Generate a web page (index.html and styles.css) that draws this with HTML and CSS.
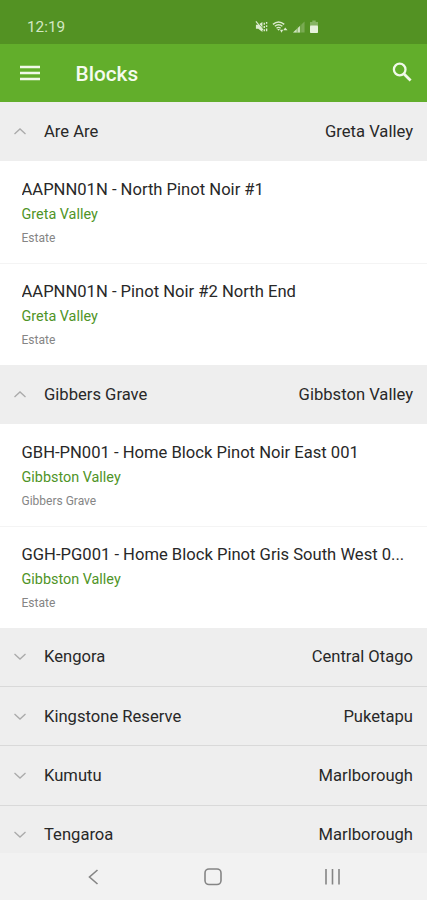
FILE: index.html
```html
<!DOCTYPE html>
<html lang="en">
<head>
    <meta charset="UTF-8">
    <meta name="viewport" content="width=device-width, initial-scale=1.0">
    <title>Blocks</title>
    <link rel="stylesheet" href="styles.css">
</head>
<body>
    <div class="status-bar">
        <span class="time">12:19</span>
        <div class="status-icons">
            <!-- muted -->
            <svg width="13" height="14" viewBox="0 0 14 14">
                <path d="M1 4.5h2.5L8 1.5v11L3.5 9H1z" fill="#dcebcf"/>
                <path d="M2 1l10 12" stroke="#539223" stroke-width="1"/>
                <path d="M1 1l7.5 9" stroke="#dcebcf" stroke-width="1.2"/>
                <path d="M10 2.5v2M10 6v2M10 9.500v2M12.5 1.5v2M12.5 5v2M12.5 8.5v3" stroke="#dcebcf" stroke-width="1.5"/>
            </svg>
            <!-- wifi -->
            <svg width="16" height="14" viewBox="0 0 17 14">
                <path d="M1 4.2Q7 -1 13 4.2M3 6.2Q7 3 11 6.2M4.8 8.3Q7 6.5 9.2 8.3" fill="none" stroke="#dcebcf" stroke-width="1.5"/>
                <path d="M5.5 9.2h3L7 11z" fill="#dcebcf"/>
                <path d="M8.5 10h3.5L10 13zM12 10.5h4.5L14 7.5z" fill="#dcebcf"/>
            </svg>
            <!-- signal -->
            <svg width="12" height="14" viewBox="0 0 13 14">
                <path d="M0 13L12.5 1v12z" fill="#79aa52"/>
                <path d="M0 13l7.5-7.2V13z" fill="#cfe3be"/>
                <path d="M4.5 6v7M8.5 3v10" stroke="#639d38" stroke-width=".8"/>
            </svg>
            <!-- battery -->
            <svg width="10" height="14" viewBox="0 0 10 14">
                <path d="M3.3 .5h3.4V2H9v4H1V2h2.3z" fill="#86b463"/>
                <rect x="1" y="5.5" width="8" height="7.5" rx=".8" fill="#e6f2dc"/>
            </svg>
        </div>
    </div>

    <div class="app-bar">
        <svg class="menu" width="20" height="16" viewBox="0 0 20 16">
            <path d="M0 2h20M0 8h20M0 14h20" stroke="#f1f9e9" stroke-width="2.3"/>
        </svg>
        <h1>Blocks</h1>
        <svg class="search" width="20" height="20" viewBox="0 0 20 20">
            <circle cx="7.7" cy="7.5" r="5.8" fill="none" stroke="#f1f9e9" stroke-width="2.3"/>
            <path d="M11.8 11.7l6.8 6.8" stroke="#f1f9e9" stroke-width="2.8"/>
        </svg>
    </div>

    <div class="list">
        <div class="group">
            <svg class="arrow" width="12" height="7" viewBox="0 0 12 7"><path d="M.5 6L6 1l5.5 5"/></svg>
            <span class="name">Are Are</span>
            <span class="region">Greta Valley</span>
        </div>
        <div class="block">
            <div class="title">AAPNN01N - North Pinot Noir #1</div>
            <div class="place">Greta Valley</div>
            <div class="owner">Estate</div>
        </div>
        <div class="block">
            <div class="title">AAPNN01N - Pinot Noir #2 North End</div>
            <div class="place">Greta Valley</div>
            <div class="owner">Estate</div>
        </div>

        <div class="group">
            <svg class="arrow" width="12" height="7" viewBox="0 0 12 7"><path d="M.5 6L6 1l5.5 5"/></svg>
            <span class="name">Gibbers Grave</span>
            <span class="region">Gibbston Valley</span>
        </div>
        <div class="block">
            <div class="title">GBH-PN001 - Home Block Pinot Noir East 001</div>
            <div class="place">Gibbston Valley</div>
            <div class="owner">Gibbers Grave</div>
        </div>
        <div class="block">
            <div class="title">GGH-PG001 - Home Block Pinot Gris South West 0...</div>
            <div class="place">Gibbston Valley</div>
            <div class="owner">Estate</div>
        </div>

        <div class="group closed">
            <svg class="arrow" width="12" height="7" viewBox="0 0 12 7"><path d="M.5 1L6 6l5.5-5"/></svg>
            <span class="name">Kengora</span>
            <span class="region">Central Otago</span>
        </div>
        <div class="group closed">
            <svg class="arrow" width="12" height="7" viewBox="0 0 12 7"><path d="M.5 1L6 6l5.5-5"/></svg>
            <span class="name">Kingstone Reserve</span>
            <span class="region">Puketapu</span>
        </div>
        <div class="group closed">
            <svg class="arrow" width="12" height="7" viewBox="0 0 12 7"><path d="M.5 1L6 6l5.5-5"/></svg>
            <span class="name">Kumutu</span>
            <span class="region">Marlborough</span>
        </div>
        <div class="group closed">
            <svg class="arrow" width="12" height="7" viewBox="0 0 12 7"><path d="M.5 1L6 6l5.5-5"/></svg>
            <span class="name">Tengaroa</span>
            <span class="region">Marlborough</span>
        </div>
    </div>

    <div class="nav-bar">
        <svg width="18" height="18" viewBox="0 0 18 18"><path d="M12.5 2L4.5 9l8 7"/></svg>
        <svg width="18" height="18" viewBox="0 0 18 18"><rect x="1" y="1" width="16" height="15.5" rx="4"/></svg>
        <svg width="18" height="18" viewBox="0 0 18 18"><path d="M3 1v15.5M9.5 1v15.5M16 1v15.5"/></svg>
    </div>
</body>
</html>
```

FILE: styles.css
```css
* {
    box-sizing: border-box;
}

body {
    display: flex;
    flex-direction: column;
    height: 900px;
    margin: 0;
    overflow: hidden;
    background-color: #fff;
    color: #282828;
    font-family: Roboto, Arial, sans-serif;
}

.status-bar {
    display: flex;
    align-items: center;
    flex: none;
    height: 44px;
    padding: 10px 108px 0 27px;
    background-color: #539223;
}

.time {
    color: #d3e8c3;
    font-size: 15.3px;
}

.status-icons {
    display: flex;
    gap: 4.5px;
    margin-left: auto;
}

.app-bar {
    display: flex;
    align-items: center;
    flex: none;
    height: 58px;
    padding: 0 15px 0 19.5px;
    background-color: #62ae2b;
}

.app-bar h1 {
    margin: 2px 0 0 36px;
    color: #f5fbef;
    font-size: 20.8px;
    font-weight: 500;
}

.search {
    margin: -2px 0 0 auto;
}

.list {
    flex: 1;
    min-height: 0;
    overflow: hidden;
}

.group {
    display: flex;
    align-items: center;
    height: 59.2px;
    padding: 0 14px;
    background-color: #eee;
    font-size: 16.6px;
}

.closed {
    height: 59.4px;
    border-bottom: 1px solid #d9d9d9;
}

.arrow {
    fill: none;
    stroke: #aaa;
    stroke-width: 1.3;
}

.name {
    margin-left: 18px;
}

.region {
    margin-left: auto;
}

.block {
    height: 101.8px;
    padding: 17px 21.5px 0;
}

.block + .block {
    padding-top: 16.2px;
    border-top: 1px solid #f4f4f4;
}

.title {
    overflow: hidden;
    font-size: 16.6px;
    line-height: 24px;
    white-space: nowrap;
    text-overflow: ellipsis;
}

.place {
    color: #4f9427;
    font-size: 14.4px;
    line-height: 25px;
}

.owner {
    color: #858585;
    font-size: 12px;
    line-height: 23.4px;
}

.nav-bar {
    display: flex;
    align-items: center;
    justify-content: space-between;
    flex: none;
    height: 47px;
    padding: 0 86px 0 85px;
    background-color: #f2f2f2;
}

.nav-bar svg {
    fill: none;
    stroke: #858585;
    stroke-width: 1.6;
}
```
